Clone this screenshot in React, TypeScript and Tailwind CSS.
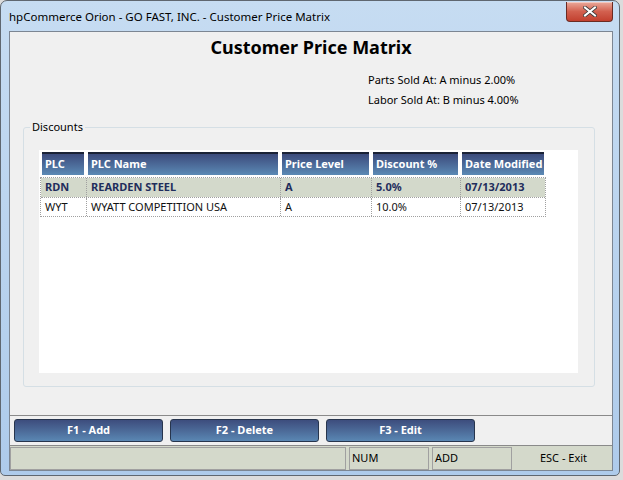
const font = { fontFamily: '"Noto Sans", "Open Sans", sans-serif' };

const columns = [
  { key: "plc", label: "PLC" },
  { key: "name", label: "PLC Name" },
  { key: "level", label: "Price Level" },
  { key: "discount", label: "Discount %" },
  { key: "date", label: "Date Modified" },
];

const rows = [
  { plc: "RDN", name: "REARDEN STEEL", level: "A", discount: "5.0%", date: "07/13/2013", selected: true },
  { plc: "WYT", name: "WYATT COMPETITION USA", level: "A", discount: "10.0%", date: "07/13/2013", selected: false },
];

const gridCols = "grid grid-cols-[46px_194px_91px_89px_86px]";

function CloseButton() {
  return (
    <div className="mt-[1px] flex h-[20px] w-[47px] items-center justify-center rounded-b-[4px] border border-t-0 border-[#6b2a22] bg-gradient-to-b from-[#e9a99b] via-[#d2604f] to-[#c2402f] shadow-[inset_0_1px_0_rgba(255,255,255,0.4)]">
      <svg width="14" height="11" viewBox="0 0 14 11">
        <path d="M2 1.5 L12 9.5 M12 1.5 L2 9.5" stroke="#3b3b3b" strokeWidth="3.6" strokeLinecap="square" />
        <path d="M2 1.5 L12 9.5 M12 1.5 L2 9.5" stroke="#ffffff" strokeWidth="2" strokeLinecap="square" />
      </svg>
    </div>
  );
}

function BlueButton({ label }: { label: string }) {
  return (
    <div className="flex h-[23px] w-[149px] items-center justify-center rounded-[3px] border border-[#27354d] bg-gradient-to-b from-[#3d4d7d] to-[#5a87b3] text-[11px] font-bold text-white">
      {label}
    </div>
  );
}

export default function App() {
  return (
    <div className="h-[480px] w-[623px] bg-[#dcdcdc]" style={font}>
      <div className="flex h-[476px] w-[620px] flex-col rounded-t-[7px] rounded-b-[5px] border border-[#5f6770] bg-gradient-to-b from-[#c6dcf2] to-[#aecbeb] pb-[4px] pl-[8px] pr-[6px]">
        {/* title bar */}
        <div className="flex h-[30px] items-start justify-between">
          <div className="pt-[7px] text-[11.5px] text-black">hpCommerce Orion - GO FAST, INC. - Customer Price Matrix</div>
          <CloseButton />
        </div>

        {/* client */}
        <div className="flex flex-1 flex-col border border-[#7c8693] bg-[#f0f0f0]">
          <div className="pt-[3px] text-center text-[18px] font-bold leading-[24px] text-black">Customer Price Matrix</div>
          <div className="mt-[13px] flex flex-col gap-[4px] pl-[358px] text-[11px] leading-[16px] text-black">
            <div>Parts Sold At: A minus 2.00%</div>
            <div>Labor Sold At: B minus 4.00%</div>
          </div>

          {/* group box */}
          <div className="relative ml-[13px] mr-[17px] mt-[19px] h-[260px] rounded-[3px] border border-[#d5dfe5] pl-[15px] pr-[16px] pt-[22px]">
            <div className="absolute left-[6px] top-[-9px] bg-[#f0f0f0] px-[2px] text-[11px] leading-[16px] text-black">Discounts</div>
            <div className="h-[223px] bg-white pl-[1px] pt-[2px]">
              <div className={gridCols}>
                {columns.map((c) => (
                  <div
                    key={c.key}
                    className="mx-[2px] flex h-[23px] items-center border-t-2 border-[#1a2236] bg-gradient-to-b from-[#3c4b7c] to-[#5b8ab5] pl-[3px] text-[11px] font-bold text-white"
                  >
                    {c.label}
                  </div>
                ))}
              </div>
              <div className="mt-[2px] w-[506px] border border-dotted border-[#a0a0a0]">
                {rows.map((r, i) => (
                  <div
                    key={r.plc}
                    className={`${gridCols} h-[19px] items-center text-[11px] ${
                      r.selected ? "bg-[#d3d9cb] font-bold text-[#1f2d5c]" : "bg-white text-[#111]"
                    } ${i > 0 ? "border-t border-dotted border-[#a0a0a0]" : ""}`}
                  >
                    <div className="flex h-full items-center border-r border-dotted border-[#a0a0a0] pl-[4px]">{r.plc}</div>
                    <div className="flex h-full items-center border-r border-dotted border-[#a0a0a0] pl-[4px]">{r.name}</div>
                    <div className="flex h-full items-center border-r border-dotted border-[#a0a0a0] pl-[4px]">{r.level}</div>
                    <div className="flex h-full items-center border-r border-dotted border-[#a0a0a0] pl-[4px]">{r.discount}</div>
                    <div className="flex h-full items-center pl-[4px]">{r.date}</div>
                  </div>
                ))}
              </div>
            </div>
          </div>

          <div className="flex-1" />

          {/* buttons */}
          <div className="border-t border-[#8a8a8a] px-[4px] pb-[3px] pt-[3px]">
            <div className="flex gap-[7px]">
              <BlueButton label="F1 - Add" />
              <BlueButton label="F2 - Delete" />
              <BlueButton label="F3 - Edit" />
            </div>
          </div>

          {/* status bar */}
          <div className="flex h-[25px] gap-[3px] border-t border-[#8a8a8a] bg-[#d4d9cb] pt-[1px] text-[11px] text-black">
            <div className="w-[336px] border border-[#a0a0a0]" />
            <div className="flex w-[80px] items-center border border-[#a0a0a0] pl-[2px]">NUM</div>
            <div className="flex w-[80px] items-center border border-[#a0a0a0] pl-[2px]">ADD</div>
            <div className="flex flex-1 items-center justify-center">ESC - Exit</div>
          </div>
        </div>
      </div>
    </div>
  );
}
